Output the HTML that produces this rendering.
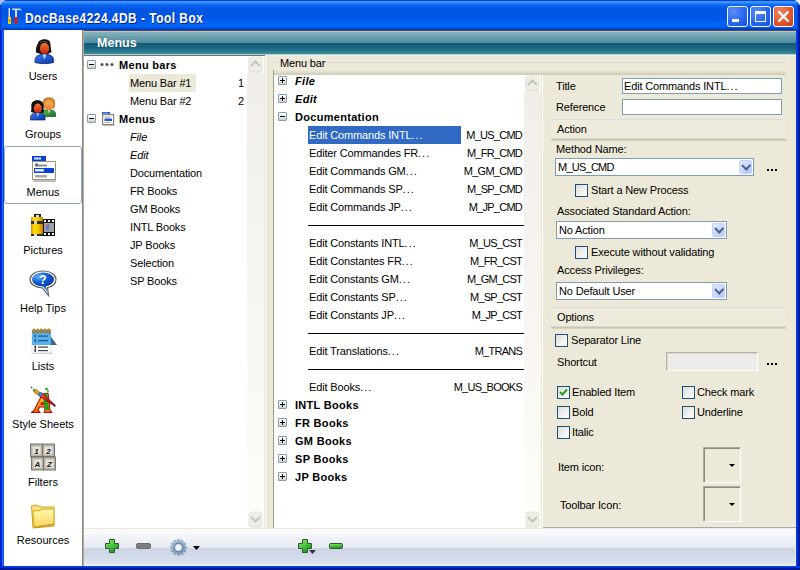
<!DOCTYPE html>
<html><head><meta charset="utf-8">
<style>
*{margin:0;padding:0;box-sizing:border-box}
html,body{width:800px;height:570px;overflow:hidden;background:#fff}
body{position:relative;font-family:"Liberation Sans",sans-serif;font-size:11px;color:#000}
.a{position:absolute}
.t{position:absolute;white-space:nowrap;line-height:13px}
#frame{left:0;top:0;width:800px;height:570px;background:#0831d9;border-radius:8px 8px 0 0}
#title{left:0;top:0;width:800px;height:30px;border-radius:7px 7px 0 0;
 background:linear-gradient(#0a3fd0 0,#0a3fd0 1px,#3d95ff 1px,#3290ff 3px,#1470f5 4px,#0862ee 6px,#0055e3 9px,#0055e3 18px,#005eee 21px,#0066f8 25px,#0063f2 27px,#0050dc 28px,#003cbf 29px,#003cbf 30px)}
#ttext{left:25px;top:10px;color:#fff;font-weight:bold;font-size:14px;line-height:16px;letter-spacing:0.6px;text-shadow:1px 1px 0 #0a1e8c;transform:scaleX(0.85);transform-origin:0 0}
#side{left:4px;top:30px;width:78px;height:536px;background:#fff}
#sideline{left:82px;top:30px;width:2px;height:536px;background:linear-gradient(90deg,#8a8678 1px,#b0ac9e 1px)}
#hdr{left:84px;top:30px;width:712px;height:25px;background:linear-gradient(#4d4d58 0,#4d4d58 1px,#bcc4ca 1px,#bcc4ca 2px,#8ab2be 2px,#6a9fae 7px,#4f8ea0 13px,#145a73 13px,#1a6580 18px,#2f7e90 22px,#3f8c98 24px,#a8d4d8 24px,#a8d4d8 25px)}
#hdrtext{left:97px;top:36px;color:#fff;font-weight:bold;font-size:13.5px;line-height:14px;text-shadow:0 0 1px #0d4a5a;transform:scaleX(0.93);transform-origin:0 0}
#main{left:84px;top:55px;width:712px;height:473px;background:linear-gradient(#f2eee2 1px,#ece9d8 1px)}
#bottom{left:84px;top:528px;width:712px;border-right:1px solid #eef0f6;height:38px;background:linear-gradient(#ede9d6 0,#ede9d6 1px,#fcfcfe 1px,#f4f5fa 8px,#e6e9f3 20px,#ccd4e6 20px,#d0d7e8 26px,#dde3ef 36px,#f2f4f8 37px,#f2f4f8 38px)}
.sitem{position:absolute;left:4px;width:78px;text-align:center}
.slabel{position:absolute;left:0;width:78px;text-align:center;white-space:nowrap}

.pm{position:absolute;width:9px;height:9px;border:1px solid #7f9db9;border-radius:1px;background:linear-gradient(#fff 0,#f4f3ee 40%,#d6d0bc 100%)}
.pm:before{content:"";position:absolute;left:1px;top:3px;width:5px;height:1px;background:#000}
.pm.p:after{content:"";position:absolute;left:3px;top:1px;width:1px;height:5px;background:#000}
.b{font-weight:bold;letter-spacing:0.3px}
.i{font-style:italic}
.n{letter-spacing:-0.15px}
.sb{position:absolute;width:17px;background:linear-gradient(#f1eeea,#f6f5f1 50%,#fdfdf9)}
.sbtn{position:absolute;width:14px;height:14px;border-radius:2px;background:linear-gradient(135deg,#f6f6f2,#e6e4dc);border:1px solid #fff;box-shadow:0 0 0 1px #e8e6de}

.inp{position:absolute;background:#fff;border:1px solid #7f9db9}
.cb{position:absolute;width:13px;height:13px;border:1px solid #1c5180;background:linear-gradient(135deg,#dcdcd7 0,#f5f5f2 70%,#fff 100%)}
.dd{position:absolute;width:13px;height:14px;border-radius:2px;background:linear-gradient(135deg,#e0eafe,#b4c8f6);border:1px solid #c3d3fd}
.dd:after{content:"";position:absolute;left:3px;top:3px;width:5px;height:5px;border-right:2px solid #4d6185;border-bottom:2px solid #4d6185;transform:translate(-0.3px,-1.8px) rotate(45deg)}
.dots{position:absolute;width:10px;height:2px;background:linear-gradient(90deg,#000 0,#000 2px,transparent 2px,transparent 4px,#000 4px,#000 6px,transparent 6px,transparent 8px,#000 8px,#000 10px)}
.sep1{position:absolute;height:1px;background:#d8dce2}
.sep2{position:absolute;height:3px;background:linear-gradient(#dcd8c8 0,#dcd8c8 1px,#c8c4b2 1px,#c8c4b2 2px,#d6d2c2 2px)}
.ibox{position:absolute;width:38px;height:36px;border:1px solid;border-color:#aca899 #fff #fff #aca899;box-shadow:inset 1px 1px 0 #8e8a7c}
.ibox:after{content:"";position:absolute;left:25px;top:16px;border-left:3px solid transparent;border-right:3px solid transparent;border-top:3px solid #000}
.d{letter-spacing:1px}
.m{letter-spacing:-0.75px}
</style></head><body>
<div id="frame" class="a"></div>
<div id="title" class="a"></div>
<div class="a" style="left:0;top:30px;width:4px;height:540px;background:linear-gradient(90deg,#0018c8 1px,#0030d8 1px,#0030d8 2px,#1c6af8 2px,#1c6af8 3px,#0850e8 3px)"></div>
<div class="a" style="left:796px;top:30px;width:4px;height:540px;background:linear-gradient(90deg,#0040f0 1px,#0030d8 1px,#0030d8 2px,#0020a8 2px,#0020a8 3px,#001890 3px)"></div>
<div class="a" style="left:0;top:566px;width:800px;height:4px;background:linear-gradient(#0040f0 1px,#0030d0 1px,#0030d0 2px,#001c98 2px)"></div>
<div class="a" style="left:0;top:566px;width:4px;height:4px;background:linear-gradient(#0030e0 1px,#0028c8 1px,#0028c8 2px,#0018a0 2px)"></div>

<div id="ttext" class="t">DocBase4224.4DB - Tool Box</div>
<div id="side" class="a"></div>
<div id="sideline" class="a"></div>
<div id="hdr" class="a"></div>
<div id="hdrtext" class="t">Menus</div>
<div id="main" class="a"></div>
<div id="bottom" class="a"></div>


<div class="a" style="left:84px;top:55px;width:181px;height:1px;background:#767264"></div>
<div class="a" style="left:84px;top:56px;width:163px;height:472px;background:#fff"></div>
<div class="sb" style="left:247px;top:56px;height:472px"></div>
<svg class="a" style="left:249px;top:511px" width="14" height="14"><path d="M3.5 5.5 L7 9 L10.5 5.5" stroke="#c8c6bc" stroke-width="2" fill="none"/></svg>
<div class="a" style="left:264px;top:56px;width:2px;height:472px;background:linear-gradient(90deg,#ece8d8 1px,#fff 1px)"></div>
<div class="pm" style="left:87px;top:60px"></div>
<svg class="a" style="left:100px;top:62px" width="15" height="5"><circle cx="2" cy="2.5" r="1.6" fill="#555"/><circle cx="7" cy="2.5" r="1.6" fill="#555"/><circle cx="12" cy="2.5" r="1.6" fill="#555"/></svg>
<div class="t b" style="left:119px;top:59px">Menu bars</div>
<div class="a" style="left:129px;top:74px;width:67px;height:18px;background:#ece9d8"></div>
<div class="t n" style="left:130px;top:77px">Menu Bar #1</div>
<div class="t" style="left:238px;top:77px">1</div>
<div class="t n" style="left:130px;top:95px">Menu Bar #2</div>
<div class="t" style="left:238px;top:95px">2</div>
<div class="pm" style="left:87px;top:114px"></div>
<svg class="a" style="left:101px;top:111px" width="15" height="15" viewBox="0 0 15 15">
 <rect x="2" y="14" width="12" height="1" fill="#d0ccc0"/>
 <rect x="1" y="1" width="8" height="2.2" fill="#2058d0"/><rect x="2" y="1.8" width="5" height="0.8" fill="#a8c0f0"/>
 <rect x="1.6" y="3.6" width="11" height="10" fill="#fff" stroke="#8a8474" stroke-width="1.2"/>
 <rect x="3.5" y="5.5" width="6" height="1" fill="#a0a0a0"/>
 <rect x="3.5" y="7.5" width="7.5" height="2.5" fill="#2058d0"/>
 <rect x="3.5" y="11" width="6" height="1" fill="#b0b0b0"/>
</svg>
<div class="t b" style="left:119px;top:113px">Menus</div>
<div class="t n i" style="left:130px;top:131px">File</div>
<div class="t n i" style="left:130px;top:149px">Edit</div>
<div class="t n " style="left:130px;top:167px">Documentation</div>
<div class="t n " style="left:130px;top:185px">FR Books</div>
<div class="t n " style="left:130px;top:203px">GM Books</div>
<div class="t n " style="left:130px;top:221px">INTL Books</div>
<div class="t n " style="left:130px;top:239px">JP Books</div>
<div class="t n " style="left:130px;top:257px">Selection</div>
<div class="t n " style="left:130px;top:275px">SP Books</div>
<div class="a" style="left:273px;top:70px;width:268px;height:458px;background:#fff;border-left:1px solid #9d9a8c;"></div>
<div class="a" style="left:274px;top:70px;width:267px;height:5px;background:linear-gradient(#cfcbbb,#fff)"></div>
<div class="sb" style="left:524px;top:75px;height:453px"></div>
<svg class="a" style="left:526px;top:511px" width="14" height="14"><path d="M3.5 5.5 L7 9 L10.5 5.5" stroke="#c8c6bc" stroke-width="2" fill="none"/></svg>
<div class="a" style="left:541px;top:75px;width:2px;height:453px;background:linear-gradient(90deg,#ece8d8 1px,#fff 1px)"></div>
<div class="pm p" style="left:278px;top:76px"></div>
<div class="t b i" style="left:295px;top:75px">File</div>
<div class="pm p" style="left:278px;top:94px"></div>
<div class="t b i" style="left:295px;top:93px">Edit</div>
<div class="pm" style="left:278px;top:112px"></div>
<div class="t b" style="left:295px;top:111px">Documentation</div>
<div class="a" style="left:308px;top:126px;width:153px;height:18px;background:#316ac5"></div>
<div class="t n" style="color:#fff;left:309px;top:129px">Edit Commands INTL<span class="d">...</span></div>
<div class="t m" style="right:278px;top:129px">M_US_CMD</div>
<div class="t n" style="left:309px;top:147px">Editer Commandes FR<span class="d">...</span></div>
<div class="t m" style="right:278px;top:147px">M_FR_CMD</div>
<div class="t n" style="left:309px;top:165px">Edit Commands GM<span class="d">...</span></div>
<div class="t m" style="right:278px;top:165px">M_GM_CMD</div>
<div class="t n" style="left:309px;top:183px">Edit Commands SP<span class="d">...</span></div>
<div class="t m" style="right:278px;top:183px">M_SP_CMD</div>
<div class="t n" style="left:309px;top:201px">Edit Commands JP<span class="d">...</span></div>
<div class="t m" style="right:278px;top:201px">M_JP_CMD</div>
<div class="t n" style="left:309px;top:237px">Edit Constants INTL<span class="d">...</span></div>
<div class="t m" style="right:278px;top:237px">M_US_CST</div>
<div class="t n" style="left:309px;top:255px">Edit Constantes FR<span class="d">...</span></div>
<div class="t m" style="right:278px;top:255px">M_FR_CST</div>
<div class="t n" style="left:309px;top:273px">Edit Constants GM<span class="d">...</span></div>
<div class="t m" style="right:278px;top:273px">M_GM_CST</div>
<div class="t n" style="left:309px;top:291px">Edit Constants SP<span class="d">...</span></div>
<div class="t m" style="right:278px;top:291px">M_SP_CST</div>
<div class="t n" style="left:309px;top:309px">Edit Constants JP<span class="d">...</span></div>
<div class="t m" style="right:278px;top:309px">M_JP_CST</div>
<div class="t n" style="left:309px;top:345px">Edit Translations<span class="d">...</span></div>
<div class="t m" style="right:278px;top:345px">M_TRANS</div>
<div class="t n" style="left:309px;top:381px">Edit Books<span class="d">...</span></div>
<div class="t m" style="right:278px;top:381px">M_US_BOOKS</div>
<div class="a" style="left:308px;top:225px;width:216px;height:1px;background:#000"></div>
<div class="a" style="left:308px;top:333px;width:216px;height:1px;background:#000"></div>
<div class="a" style="left:308px;top:369px;width:216px;height:1px;background:#000"></div>
<div class="pm p" style="left:278px;top:400px"></div>
<div class="t b" style="left:295px;top:399px">INTL Books</div>
<div class="pm p" style="left:278px;top:418px"></div>
<div class="t b" style="left:295px;top:417px">FR Books</div>
<div class="pm p" style="left:278px;top:436px"></div>
<div class="t b" style="left:295px;top:435px">GM Books</div>
<div class="pm p" style="left:278px;top:454px"></div>
<div class="t b" style="left:295px;top:453px">SP Books</div>
<div class="pm p" style="left:278px;top:472px"></div>
<div class="t b" style="left:295px;top:471px">JP Books</div>

<!-- right panel -->
<div class="a" style="left:274px;top:62px;width:512px;height:1px;background:#dcdad6"></div>
<div class="a" style="left:274px;top:70px;width:512px;height:5px;background:linear-gradient(#ece9d8,#d8d4c2 70%,#cdc9b6)"></div>
<div class="t n" style="left:556px;top:80px">Title</div>
<div class="inp" style="left:622px;top:78px;width:160px;height:16px"></div>
<div class="t n" style="left:624px;top:80px">Edit Commands INTL<span class="d">...</span></div>
<div class="t n" style="left:556px;top:101px">Reference</div>
<div class="inp" style="left:622px;top:99px;width:160px;height:16px"></div>
<div class="sep1" style="left:551px;top:119px;width:235px"></div>
<div class="a" style="left:551px;top:120px;width:235px;height:18px;background:#eeebdd"></div>
<div class="sep2" style="left:551px;top:138px;width:235px"></div>
<div class="t n" style="left:556px;top:143px">Method Name:</div>
<div class="inp" style="left:555px;top:158px;width:199px;height:18px"></div>
<div class="dd" style="left:739px;top:160px"></div>
<div class="t m" style="left:558px;top:161px">M_US_CMD</div>
<div class="dots" style="left:767px;top:169px"></div>
<div class="t n" style="left:557px;top:123px">Action</div>
<div class="cb" style="left:575px;top:184px"></div>
<div class="t n" style="left:591px;top:184px">Start a New Process</div>
<div class="t n" style="left:557px;top:205px">Associated Standard Action:</div>
<div class="inp" style="left:556px;top:221px;width:171px;height:18px"></div>
<div class="dd" style="left:712px;top:223px"></div>
<div class="t n" style="left:559px;top:224px">No Action</div>
<div class="cb" style="left:575px;top:246px"></div>
<div class="t n" style="left:591px;top:246px">Execute without validating</div>
<div class="t n" style="left:557px;top:264px">Access Privileges:</div>
<div class="inp" style="left:556px;top:282px;width:171px;height:18px"></div>
<div class="dd" style="left:712px;top:284px"></div>
<div class="t n" style="left:559px;top:285px">No Default User</div>
<div class="sep1" style="left:551px;top:307px;width:235px"></div>
<div class="a" style="left:551px;top:308px;width:235px;height:18px;background:#eeebdd"></div>
<div class="sep2" style="left:551px;top:326px;width:235px"></div>
<div class="t n" style="left:557px;top:311px">Options</div>
<div class="cb" style="left:555px;top:334px"></div>
<div class="t n" style="left:571px;top:334px">Separator Line</div>
<div class="t n" style="left:557px;top:356px">Shortcut</div>
<div class="a" style="left:666px;top:352px;width:92px;height:19px;border:1px solid;border-color:#b4b0a2 #fff #fff #b4b0a2;box-shadow:inset 1px 1px 0 #dcd8cc;background:#ebebea"></div>
<div class="dots" style="left:767px;top:363px"></div>
<div class="cb" style="left:557px;top:386px"></div>
<svg class="a" style="left:557px;top:386px" width="13" height="13"><path d="M3 6 L5.5 8.5 L10 3.5" stroke="#21a121" stroke-width="2" fill="none"/></svg>
<div class="t n" style="left:572px;top:386px">Enabled Item</div>
<div class="cb" style="left:682px;top:386px"></div>
<div class="t n" style="left:697px;top:386px">Check mark</div>
<div class="cb" style="left:557px;top:406px"></div>
<div class="t n" style="left:572px;top:406px">Bold</div>
<div class="cb" style="left:682px;top:406px"></div>
<div class="t n" style="left:697px;top:406px">Underline</div>
<div class="cb" style="left:557px;top:426px"></div>
<div class="t n" style="left:572px;top:426px">Italic</div>
<div class="t n" style="left:558px;top:461px">Item icon:</div>
<div class="ibox" style="left:703px;top:447px"></div>
<div class="t n" style="left:560px;top:499px">Toolbar Icon:</div>
<div class="ibox" style="left:703px;top:486px"></div>
<div class="a" style="left:543px;top:526px;width:253px;height:3px;background:linear-gradient(#f0ecdc 1px,#a8a8b4 1px,#a8a8b4 2px,#eaeaf0 2px)"></div>

<div class="t n" style="left:280px;top:57px">Menu bar</div>
<svg class="a" style="left:247px;top:56px" width="17" height="17" viewBox="0 0 17 17"><rect x="0.5" y="0.5" width="16" height="16" fill="none" stroke="#fff"/><rect x="2.5" y="15.5" width="12" height="1" fill="#dcdace"/><rect x="2" y="1" width="13" height="14" rx="2" fill="#eeeee8" stroke="#e2e0d8" stroke-width="0.8"/><path transform="translate(1 0)" d="M3 10 L7.5 5.5 L12 10" stroke="#c6c6be" stroke-width="2.2" fill="none"/></svg>
<svg class="a" style="left:247px;top:511px" width="17" height="17" viewBox="0 0 17 17"><rect x="0.5" y="0.5" width="16" height="16" fill="none" stroke="#fff"/><rect x="2.5" y="15.5" width="12" height="1" fill="#dcdace"/><rect x="2" y="1" width="13" height="14" rx="2" fill="#eeeee8" stroke="#e2e0d8" stroke-width="0.8"/><path transform="translate(1 0)" d="M3 6 L7.5 10.5 L12 6" stroke="#c6c6be" stroke-width="2.2" fill="none"/></svg>
<svg class="a" style="left:524px;top:75px" width="17" height="17" viewBox="0 0 17 17"><rect x="0.5" y="0.5" width="16" height="16" fill="none" stroke="#fff"/><rect x="2.5" y="15.5" width="12" height="1" fill="#dcdace"/><rect x="2" y="1" width="13" height="14" rx="2" fill="#eeeee8" stroke="#e2e0d8" stroke-width="0.8"/><path transform="translate(1 0)" d="M3 10 L7.5 5.5 L12 10" stroke="#c6c6be" stroke-width="2.2" fill="none"/></svg>
<svg class="a" style="left:524px;top:511px" width="17" height="17" viewBox="0 0 17 17"><rect x="0.5" y="0.5" width="16" height="16" fill="none" stroke="#fff"/><rect x="2.5" y="15.5" width="12" height="1" fill="#dcdace"/><rect x="2" y="1" width="13" height="14" rx="2" fill="#eeeee8" stroke="#e2e0d8" stroke-width="0.8"/><path transform="translate(1 0)" d="M3 6 L7.5 10.5 L12 6" stroke="#c6c6be" stroke-width="2.2" fill="none"/></svg>
<!-- bottom toolbar icons -->
<svg class="a" style="left:105px;top:539px" width="14" height="14" viewBox="0 0 14 14">
 <defs><linearGradient id="gp" x1="0" y1="0" x2="0.6" y2="1"><stop offset="0" stop-color="#8ef070"/><stop offset="1" stop-color="#1a9a1a"/></linearGradient></defs>
 <path d="M4.5 0.5 H9.5 V4.5 H13.5 V9.5 H9.5 V13.5 H4.5 V9.5 H0.5 V4.5 H4.5 Z" fill="url(#gp)" stroke="#2a5a2a" stroke-width="1" stroke-linejoin="round"/>
</svg>
<svg class="a" style="left:136px;top:543px" width="15" height="6"><rect x="0.5" y="0.5" width="14" height="5" rx="1.5" fill="#7d7d7d" stroke="#6a6a6a"/></svg>
<svg class="a" style="left:170px;top:539px" width="17" height="17" viewBox="0 0 17 17">
 <defs><linearGradient id="gr" x1="0" y1="0" x2="0.7" y2="1"><stop offset="0" stop-color="#b0c8dc"/><stop offset="1" stop-color="#7896b4"/></linearGradient></defs>
 <path d="M16.65 7.56 L16.65 9.44 L15.02 9.53 L14.66 10.87 L16.03 11.76 L15.08 13.39 L13.63 12.65 L12.65 13.63 L13.39 15.08 L11.76 16.03 L10.87 14.66 L9.53 15.02 L9.44 16.65 L7.56 16.65 L7.47 15.02 L6.13 14.66 L5.24 16.03 L3.61 15.08 L4.35 13.63 L3.37 12.65 L1.92 13.39 L0.97 11.76 L2.34 10.87 L1.98 9.53 L0.35 9.44 L0.35 7.56 L1.98 7.47 L2.34 6.13 L0.97 5.24 L1.92 3.61 L3.37 4.35 L4.35 3.37 L3.61 1.92 L5.24 0.97 L6.13 2.34 L7.47 1.98 L7.56 0.35 L9.44 0.35 L9.53 1.98 L10.87 2.34 L11.76 0.97 L13.39 1.92 L12.65 3.37 L13.63 4.35 L15.08 3.61 L16.03 5.24 L14.66 6.13 L15.02 7.47 Z" fill="url(#gr)" stroke="#7f98b0" stroke-width="0.5"/>
 <circle cx="8.5" cy="8.5" r="4.4" fill="none" stroke="#6a8aaa" stroke-width="1.4"/>
 <circle cx="8.5" cy="8.5" r="3.2" fill="#eef2f6"/>
</svg>
<svg class="a" style="left:193px;top:546px" width="7" height="4"><path d="M0 0 H7 L3.5 4 Z" fill="#000"/></svg>
<svg class="a" style="left:298px;top:539px" width="14" height="14" viewBox="0 0 14 14">
 <path d="M4.5 0.5 H9.5 V4.5 H13.5 V9.5 H9.5 V13.5 H4.5 V9.5 H0.5 V4.5 H4.5 Z" fill="url(#gp)" stroke="#2a5a2a" stroke-width="1" stroke-linejoin="round"/>
</svg>
<svg class="a" style="left:309px;top:550px" width="7" height="4"><path d="M0 0 H7 L3.5 4 Z" fill="#333"/></svg>
<svg class="a" style="left:329px;top:543px" width="14" height="6" viewBox="0 0 14 6">
 <defs><linearGradient id="gm" x1="0" y1="0" x2="0.3" y2="1"><stop offset="0" stop-color="#8ef070"/><stop offset="1" stop-color="#1a9a1a"/></linearGradient></defs>
 <rect x="0.5" y="0.5" width="13" height="5" rx="1" fill="url(#gm)" stroke="#2a5a2a"/></svg>

<!-- title icon -->
<svg class="a" style="left:7px;top:7px" width="16" height="18" viewBox="0 0 16 18">
 <rect x="1.5" y="1" width="1.5" height="9" fill="#d8dce8"/>
 <rect x="1" y="10" width="3" height="7" fill="#f8c800"/>
 <rect x="1" y="13" width="3" height="1" fill="#c89000"/>
 <path d="M5 1.5 L13 1.5 L15 4 L12 3 L10 3 L10 10 L8 10 L8 3 L5 3 Z" fill="#d8dce8"/>
 <rect x="7.5" y="10" width="3" height="7" fill="#d82010"/>
</svg>
<!-- title buttons -->
<div class="a" style="left:727px;top:6px;width:21px;height:21px;border:1px solid #fff;border-radius:3px;background:radial-gradient(circle at 30% 25%,#5b8ffb,#2663f0 60%,#1a50d8)"></div>
<div class="a" style="left:732px;top:19px;width:7px;height:3px;background:#fff"></div>
<div class="a" style="left:750px;top:6px;width:21px;height:21px;border:1px solid #fff;border-radius:3px;background:radial-gradient(circle at 30% 25%,#5b8ffb,#2663f0 60%,#1a50d8)"></div>
<div class="a" style="left:755px;top:11px;width:11px;height:11px;border:1px solid #fff;border-top-width:3px"></div>
<div class="a" style="left:773px;top:6px;width:21px;height:21px;border:1px solid #fff;border-radius:3px;background:radial-gradient(circle at 30% 25%,#f08868,#e0522c 60%,#c8401c)"></div>
<svg class="a" style="left:773px;top:6px" width="21" height="21"><path d="M5.5 5.5 L15.5 15.5 M15.5 5.5 L5.5 15.5" stroke="#fff" stroke-width="2.2"/></svg>
<!-- corner -->
<div class="a" style="left:795px;top:0;width:5px;height:5px;background:radial-gradient(circle at 0 100%,transparent 5px,#ece9d8 5.5px)"></div>
<div class="a" style="left:0;top:0;width:6px;height:6px;background:radial-gradient(circle at 100% 100%,transparent 5.5px,#a8bce8 6px)"></div>
<div class="a" style="left:0;top:5px;width:2px;height:25px;background:linear-gradient(90deg,#0a3cd0 1px,#0a50e8 1px)"></div>
<div class="a" style="left:796px;top:5px;width:4px;height:25px;background:linear-gradient(90deg,#0a58f0 1px,#0040d8 1px,#0040d8 2px,#0030b8 2px,#0030b8 3px,#002098 3px)"></div>

<!-- sidebar icons -->
<svg class="a" style="left:33px;top:38px" width="22" height="27" viewBox="0 0 22 27">
 <defs><linearGradient id="face" x1="0" y1="0" x2="0" y2="1"><stop offset="0" stop-color="#f47a30"/><stop offset="1" stop-color="#c82010"/></linearGradient>
 <linearGradient id="suit" x1="0" y1="0" x2="1" y2="1"><stop offset="0" stop-color="#3a7af8"/><stop offset="1" stop-color="#0834a8"/></linearGradient></defs>
 <path d="M5 5 C6 2 9 1 12 1.2 C16 1.5 18 3.5 17.5 8 L18.5 14 L15 16 L8 16 L3 14.5 C2.5 11 3.5 8 5 5 Z" fill="#101010"/>
 <path d="M7 4.5 C9 3 14 3 15 4.5" stroke="#505050" stroke-width="1" fill="none"/>
 <ellipse cx="11.5" cy="10.5" rx="4.6" ry="5.8" fill="url(#face)"/>
 <path d="M2 24.5 C1.5 19.5 4 17.2 8 16.6 L15 16.6 C19 17.2 21.2 19.5 20.5 24.5 C15 26 7 26 2 24.5 Z" fill="url(#suit)" stroke="#102060" stroke-width="0.8"/>
 <path d="M9.5 16.6 L11.5 21.5 L13.5 16.6 Z" fill="#a8d8f8"/>
</svg>

<svg class="a" style="left:29px;top:97px" width="28" height="25" viewBox="0 0 28 25">
 <defs><linearGradient id="face2" x1="0" y1="0" x2="0" y2="1"><stop offset="0" stop-color="#fcb060"/><stop offset="1" stop-color="#e88028"/></linearGradient>
 <linearGradient id="suit2" x1="0" y1="0" x2="1" y2="1"><stop offset="0" stop-color="#60c860"/><stop offset="1" stop-color="#0e6a16"/></linearGradient></defs>
 <path d="M13.5 13.5 C13 17 13 19 13.5 19.5 L26.5 19.5 C27 16 26 14 23 13 L16 13 Z" fill="url(#suit2)" stroke="#1a4a1a" stroke-width="0.7"/>
 <path d="M19 13 L20 16.5 L21 13 Z" fill="#e8f4f4"/>
 <path d="M14 8 C13.5 2.5 16 0.8 20 0.8 C24 0.8 26.5 2.5 25.5 8 L25 11 L15 11 Z" fill="#d88a2a" stroke="#8a5010" stroke-width="0.6"/>
 <ellipse cx="19.8" cy="8.5" rx="4.3" ry="5" fill="url(#face2)"/>
 <path d="M2.5 11 C1.5 5 4.5 3.2 8.5 3.2 C12.5 3.2 15 5 14.5 11 L15 15.5 L11 16 L6 16 L2 15 Z" fill="#0c0c0c"/>
 <ellipse cx="8.8" cy="11.5" rx="4" ry="5" fill="url(#face)"/>
 <path d="M1.5 23 C1 18.5 2.5 16.8 5.5 16.2 L12 16.2 C15 16.8 16.5 18.5 16 23 Z" fill="url(#suit)" stroke="#102060" stroke-width="0.7"/>
 <path d="M7.5 16.2 L8.8 20 L10 16.2 Z" fill="#a8d8f8"/>
</svg>

<svg class="a" style="left:31px;top:155px" width="27" height="28" viewBox="0 0 27 28">
 <rect x="2" y="25" width="23" height="2" fill="#707070" opacity="0.45"/>
 <rect x="1.5" y="6.5" width="23" height="18" fill="#fff" stroke="#a09478"/>
 <rect x="1" y="1" width="14" height="5" fill="#0840d0"/>
 <rect x="3" y="2.5" width="7" height="2" fill="#d8e4ff"/>
 <rect x="4" y="8.5" width="3" height="3" fill="#707070"/><rect x="7" y="9.5" width="9" height="2" fill="#909090"/>
 <rect x="3" y="13" width="20" height="5" fill="#0840d0"/>
 <rect x="4" y="14" width="9" height="2.5" fill="#e0e8ff"/>
 <rect x="4" y="20" width="12" height="2.5" fill="#a8a8a8"/>
</svg>

<svg class="a" style="left:30px;top:213px" width="27" height="25" viewBox="0 0 27 25">
 <defs><linearGradient id="can" x1="0" y1="0" x2="1" y2="0"><stop offset="0" stop-color="#f08010"/><stop offset="0.25" stop-color="#f8e000"/><stop offset="0.6" stop-color="#f8c800"/><stop offset="1" stop-color="#c07800"/></linearGradient></defs>
 <rect x="4" y="1" width="7" height="4" fill="#202020"/><rect x="6" y="2" width="3" height="2" fill="#e0e0e0"/>
 <rect x="13" y="6" width="12" height="17" fill="#101010"/>
 <rect x="14" y="10" width="10" height="9" fill="#a0a0a0"/><rect x="16" y="11" width="3" height="6" fill="#5080d0"/><rect x="16" y="11" width="2" height="2" fill="#e06060"/>
 <rect x="14" y="7" width="2" height="2" fill="#fff"/><rect x="18" y="7" width="2" height="2" fill="#fff"/><rect x="22" y="7" width="2" height="2" fill="#fff"/>
 <rect x="14" y="20" width="2" height="2" fill="#fff"/><rect x="18" y="20" width="2" height="2" fill="#fff"/><rect x="22" y="20" width="2" height="2" fill="#fff"/>
 <rect x="1" y="4" width="12" height="19" fill="url(#can)"/>
 <rect x="1" y="8" width="12" height="3" fill="#303030"/><rect x="4" y="8" width="3" height="3" fill="#d0d0d0"/>
 <rect x="1" y="21" width="12" height="2" fill="#303030"/><rect x="4" y="21" width="3" height="2" fill="#e0e0e0"/>
</svg>

<svg class="a" style="left:29px;top:270px" width="28" height="27" viewBox="0 0 28 27">
 <defs><radialGradient id="bub" cx="0.3" cy="0.3" r="0.8"><stop offset="0" stop-color="#70b0f8"/><stop offset="0.5" stop-color="#1060d0"/><stop offset="1" stop-color="#0838a0"/></radialGradient></defs>
 <path d="M14 1 C22 1 27 5 27 9.5 C27 14 23 17 18.5 17.5 L19.5 25.5 L13.5 18 C6 17.5 1 14 1 9.5 C1 5 6 1 14 1 Z" fill="#fff" stroke="#606060" stroke-width="1.2"/>
 <ellipse cx="14" cy="9.5" rx="11" ry="7" fill="url(#bub)"/>
 <path d="M16.5 15.5 L18.5 22 L14 16 Z" fill="#1050c0"/>
 <text x="14" y="14" font-family="Liberation Sans" font-weight="bold" font-size="12" fill="#fff" text-anchor="middle">?</text>
</svg>

<svg class="a" style="left:31px;top:328px" width="27" height="27" viewBox="0 0 27 27">
 <rect x="2" y="24" width="19" height="2" fill="#808080" opacity="0.35"/>
 <rect x="1" y="3" width="19" height="22" fill="#fff" stroke="#d0d0d0" stroke-width="0.6"/>
 <path d="M1 2 L20 2 L20 17 L1 17 Z" fill="#5ab0e8"/>
 <path d="M20 9 L26 17 L20 17 Z" fill="#3a6888"/>
 <rect x="7" y="7.5" width="10" height="1.2" fill="#1a5a90"/><rect x="7" y="12" width="10" height="1.2" fill="#1a5a90"/>
 <rect x="7" y="18.5" width="10" height="1.2" fill="#404040"/><rect x="7" y="22" width="10" height="1.2" fill="#404040"/>
 <rect x="3.5" y="6.5" width="1.5" height="3" fill="#1a5a90"/><rect x="3.5" y="11" width="1.5" height="3" fill="#1a5a90"/>
 <rect x="3.5" y="17.5" width="1.5" height="3" fill="#303030"/><rect x="3.5" y="21" width="1.5" height="3" fill="#303030"/>
 <g fill="#d89818" stroke="#604010" stroke-width="0.5"><ellipse cx="3" cy="3" rx="1.3" ry="2.2"/><ellipse cx="6.8" cy="3" rx="1.3" ry="2.2"/><ellipse cx="10.5" cy="3" rx="1.3" ry="2.2"/><ellipse cx="14.2" cy="3" rx="1.3" ry="2.2"/><ellipse cx="17.8" cy="3" rx="1.3" ry="2.2"/></g>
</svg>

<svg class="a" style="left:30px;top:386px" width="28" height="28" viewBox="0 0 28 28">
 <defs><linearGradient id="aorg" x1="0" y1="0" x2="0" y2="1"><stop offset="0" stop-color="#f8d030"/><stop offset="1" stop-color="#f07010"/></linearGradient>
 <linearGradient id="brr" x1="0" y1="0" x2="1" y2="1"><stop offset="0" stop-color="#ff6060"/><stop offset="0.5" stop-color="#e01010"/><stop offset="1" stop-color="#a00808"/></linearGradient></defs>
 <path d="M1.5 26.5 L4 24.5 L12.5 8 L18 7 L20 24.5 L22 26.5 L14 26.5 L15 24.5 L14.5 21 L9.5 21 L8 24.5 L10 26.5 Z" fill="url(#aorg)" stroke="#b01008" stroke-width="1.1" stroke-linejoin="round"/>
 <path d="M13 8.5 L17.5 7.5 L19 24 L15 24 Z" fill="#22a022"/>
 <path d="M10 19 L14.5 19 L14 16 L11.5 16 Z" fill="#c02010"/>
 <path d="M8.5 9.5 L11.5 6.5 L25.5 19.5 L25 20.5 Z" fill="url(#brr)" stroke="#700808" stroke-width="0.7"/>
 <ellipse cx="10" cy="8" rx="2.2" ry="2" fill="#2090e0"/>
 <path d="M3.5 3.5 C5 2.5 8 4 9.5 6.5 L8 8.5 C5 8 3 6 3.5 3.5 Z" fill="#e0a020" stroke="#705010" stroke-width="0.6"/>
 <path d="M3 2.5 L5.5 4.5 L4 6 Z" fill="#20a020"/>
 <circle cx="1.5" cy="1.5" r="0.9" fill="#407040"/><circle cx="16.5" cy="3" r="1.3" fill="#20a020"/><circle cx="18" cy="5" r="0.9" fill="#20a020"/>
</svg>

<svg class="a" style="left:30px;top:443px" width="27" height="29" viewBox="0 0 27 29">
 <g stroke="#7a7468" stroke-width="1">
 <rect x="0.5" y="1" width="12" height="12.5" fill="#bab4a8"/><rect x="12.5" y="1" width="12" height="12.5" fill="#bab4a8"/>
 <rect x="1.5" y="14" width="12" height="13" fill="#bab4a8"/><rect x="13.5" y="14" width="12" height="13" fill="#bab4a8"/></g>
 <rect x="2.5" y="3.5" width="8" height="8" fill="#e4e2de"/><rect x="14.5" y="3.5" width="8" height="8" fill="#e4e2de"/>
 <rect x="3.5" y="16.5" width="8" height="8.5" fill="#e4e2de"/><rect x="15.5" y="16.5" width="8" height="8.5" fill="#e4e2de"/>
 <g font-family="Liberation Sans" font-weight="bold" font-style="italic" font-size="8" fill="#202020" text-anchor="middle">
 <text x="6.5" y="10.5">1</text><text x="18.5" y="10.5">2</text><text x="7.5" y="23.5">A</text><text x="19.5" y="23.5">Z</text></g>
</svg>

<svg class="a" style="left:30px;top:503px" width="27" height="27" viewBox="0 0 27 27">
 <defs><linearGradient id="fold" x1="0" y1="0" x2="0" y2="1"><stop offset="0" stop-color="#fff8b0"/><stop offset="1" stop-color="#f8d860"/></linearGradient></defs>
 <path d="M1.5 3 L7 2 L10 4 L24 4 L24 23 L3 25 Z" fill="#f8e078" stroke="#d0a020" stroke-width="1"/>
 <path d="M3 8 L10 7.5 L12 6 L24 6 L24 21 L4 24 Z" fill="url(#fold)" stroke="#d8a820" stroke-width="1"/>
 <path d="M4 24.5 L24 21.5" stroke="#c89010" stroke-width="1.2"/>
</svg>

<!-- sidebar labels -->
<div class="t" style="left:4px;width:78px;text-align:center;top:70px">Users</div>
<div class="t" style="left:4px;width:78px;text-align:center;top:128px">Groups</div>
<div class="a" style="left:4px;top:146px;width:78px;height:58px;border:1px solid #8fa6c4;border-radius:3px"></div>
<div class="t" style="left:4px;width:78px;text-align:center;top:186px">Menus</div>
<div class="t" style="left:4px;width:78px;text-align:center;top:244px">Pictures</div>
<div class="t" style="left:4px;width:78px;text-align:center;top:302px">Help Tips</div>
<div class="t" style="left:4px;width:78px;text-align:center;top:360px">Lists</div>
<div class="t" style="left:4px;width:78px;text-align:center;top:418px">Style Sheets</div>
<div class="t" style="left:4px;width:78px;text-align:center;top:476px">Filters</div>
<div class="t" style="left:4px;width:78px;text-align:center;top:534px">Resources</div>

</body></html>
